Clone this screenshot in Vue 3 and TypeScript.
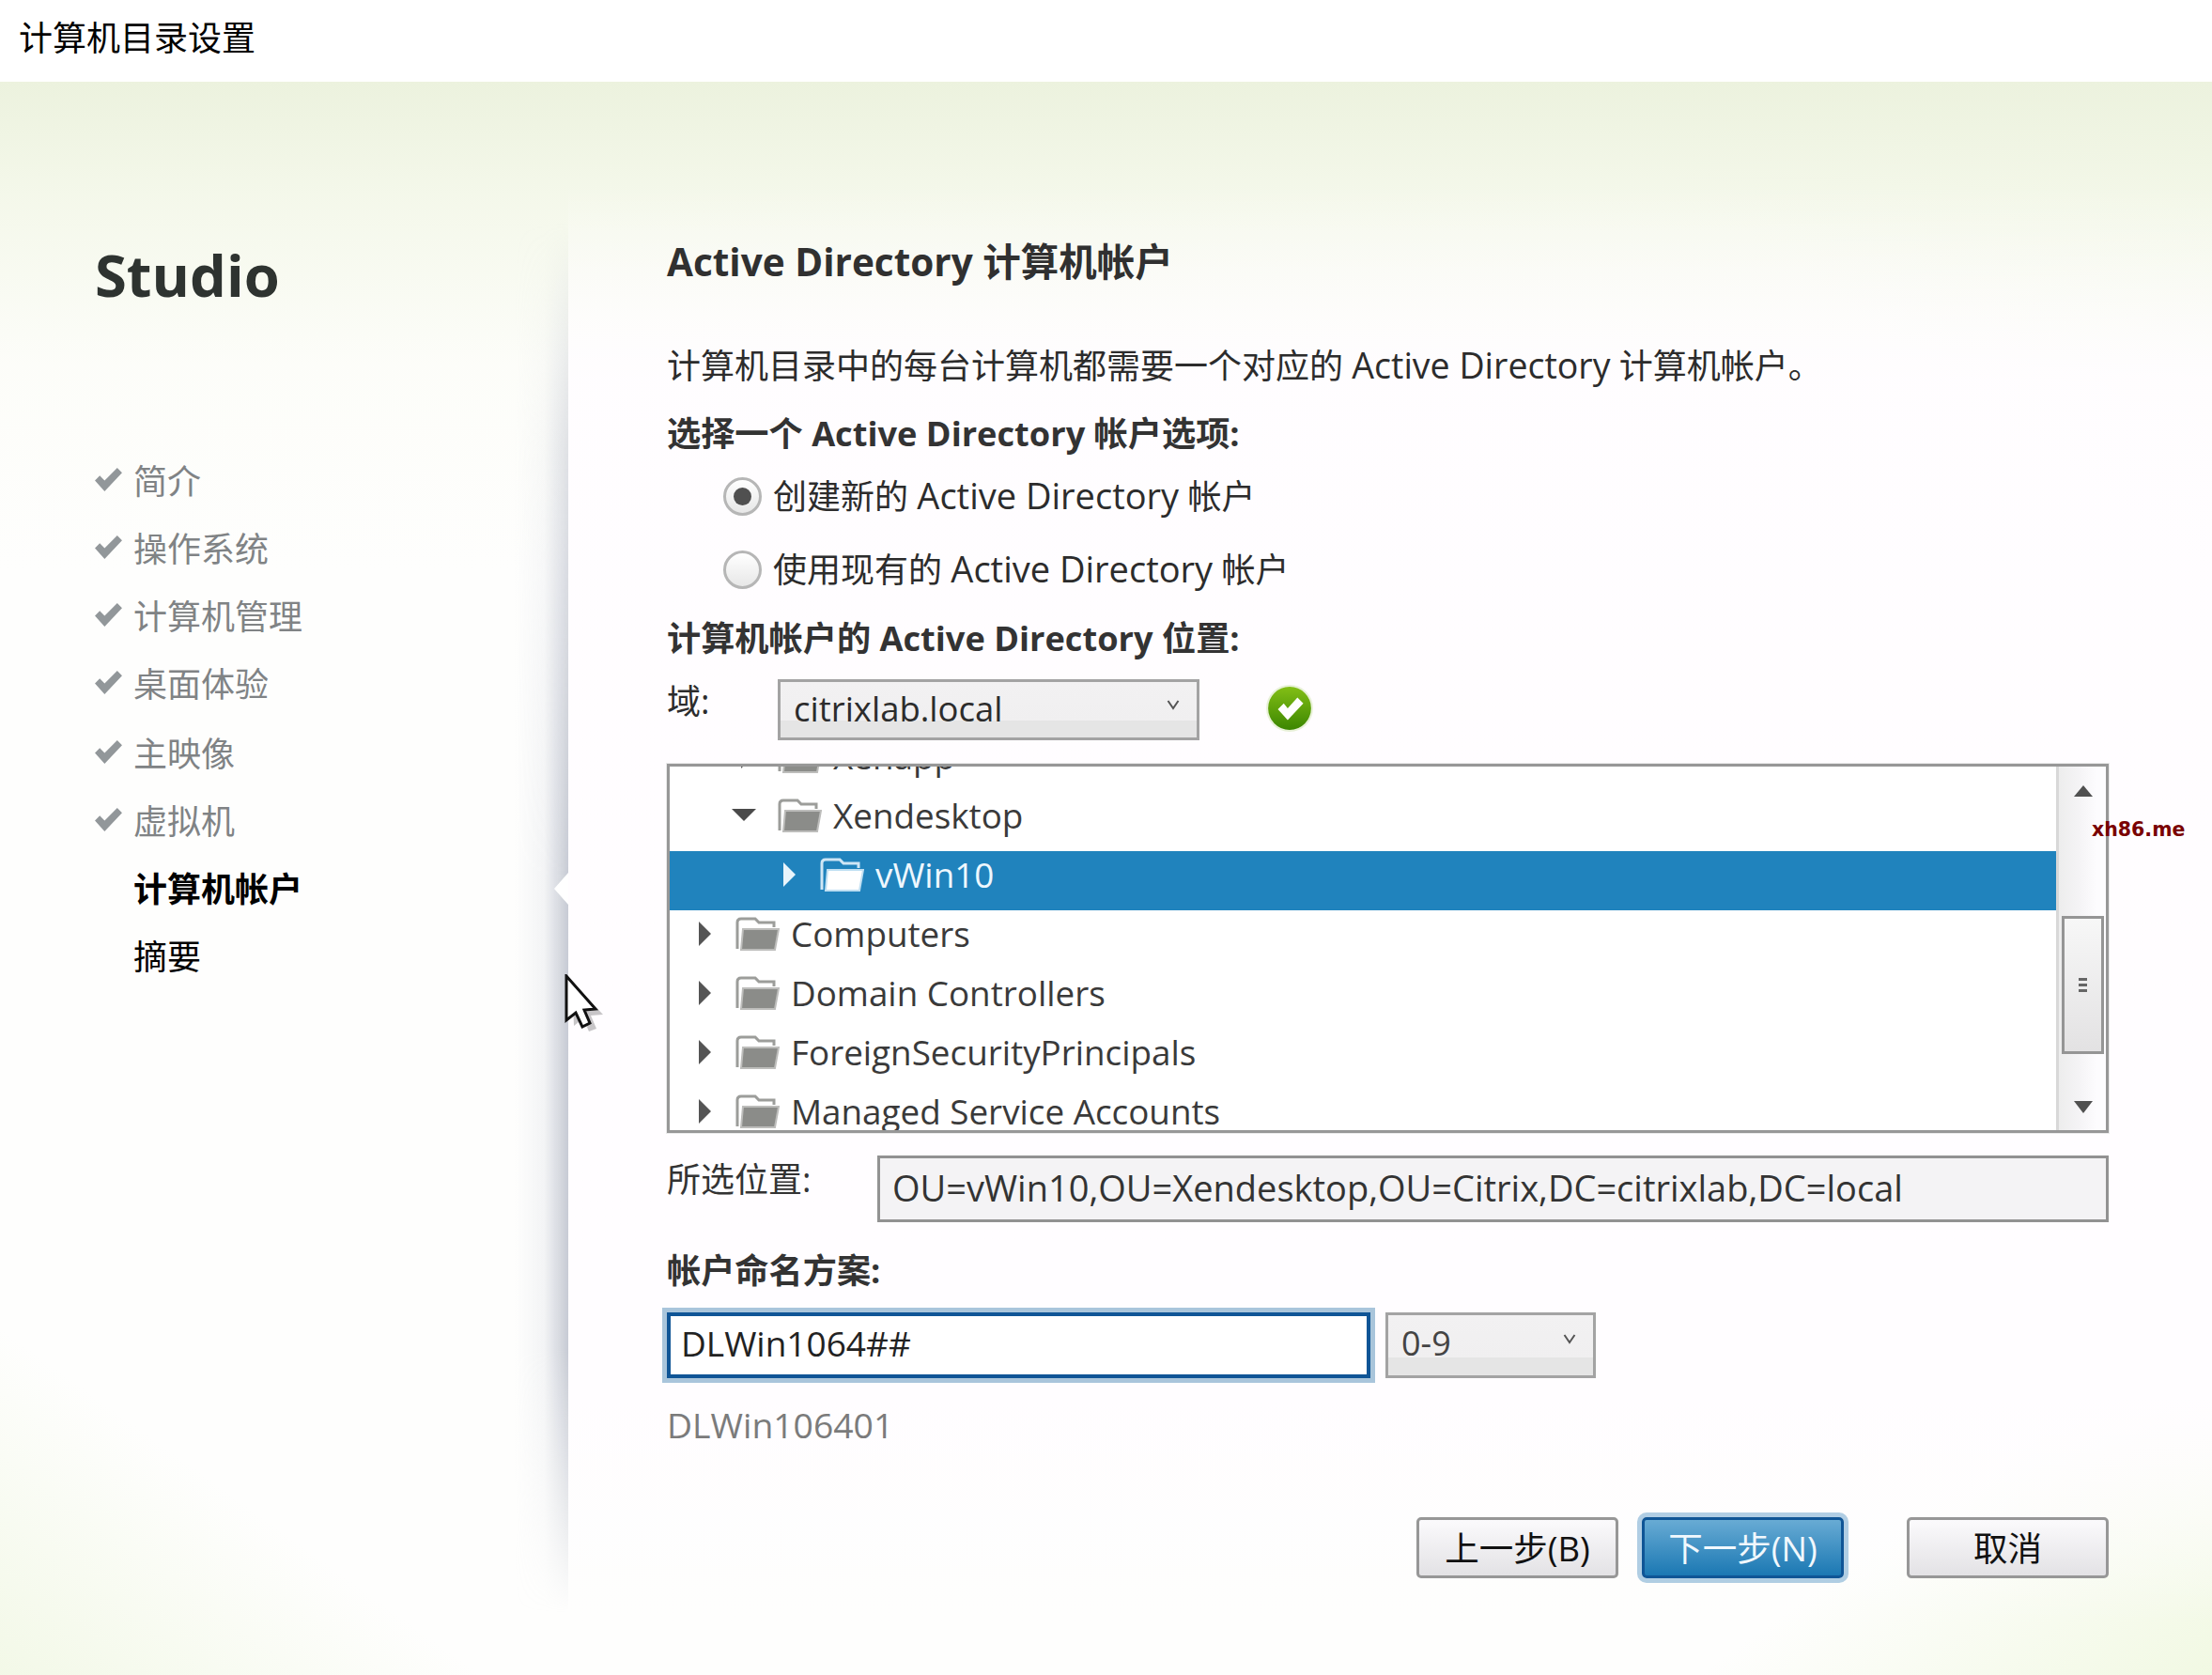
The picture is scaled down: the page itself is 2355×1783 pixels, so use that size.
<script setup lang="ts">
interface TreeRow { label: string; level: number; state: 'open' | 'closed' | 'none'; selected?: boolean }

const steps = [
  { label: '简介', done: true },
  { label: '操作系统', done: true },
  { label: '计算机管理', done: true },
  { label: '桌面体验', done: true },
  { label: '主映像', done: true },
  { label: '虚拟机', done: true },
  { label: '计算机帐户', done: false, current: true },
  { label: '摘要', done: false, current: true },
]

const rows: TreeRow[] = [
  { label: 'Xenapp', level: 1, state: 'closed' },
  { label: 'Xendesktop', level: 1, state: 'open' },
  { label: 'vWin10', level: 2, state: 'closed', selected: true },
  { label: 'Computers', level: 0, state: 'closed' },
  { label: 'Domain Controllers', level: 0, state: 'closed' },
  { label: 'ForeignSecurityPrincipals', level: 0, state: 'closed' },
  { label: 'Managed Service Accounts', level: 0, state: 'closed' },
]
</script>

<template>
  <div class="page">
    <header class="title">计算机目录设置</header>
    <main class="wizard">
      <div class="edge"></div>
      <div class="notch"></div>
      <svg class="cursor" width="42" height="62" viewBox="0 0 42 62">
        <path d="M5 6 L7 53 L17 45 L23 59 L31 56 L25 42 L38 41 Z" fill="#000" opacity=".22" transform="translate(3 2)" />
        <path d="M2 2 V49 L12 41 L19 56 L27 52 L21 38 L33 37 Z" fill="#fff" stroke="#111" stroke-width="3" stroke-linejoin="miter" />
      </svg>

      <aside class="side">
        <h1 class="brand">Studio</h1>
        <ul class="steps">
          <li v-for="s in steps" :key="s.label" class="step" :class="{ done: s.done, current: s.current }">
            <svg v-if="s.done" class="tick" width="31" height="27" viewBox="0 0 30 26">
              <path d="M1 14 L6 9 L11 14 L24 1 L29 6 L11 25 Z" fill="#92979a" />
            </svg>
            <span>{{ s.label }}</span>
          </li>
        </ul>
      </aside>

      <section class="panel">
        <h2 class="head">Active Directory 计算机帐户</h2>
        <p class="line para">计算机目录中的每台计算机都需要一个对应的 <span class="lat">Active Directory</span> 计算机帐户。</p>
        <p class="line strong opt">选择一个 Active Directory 帐户选项:</p>
        <label class="radio-row first"><i class="radio on"></i><span>创建新的 <span class="lat">Active Directory</span> 帐户</span></label>
        <label class="radio-row second"><i class="radio"></i><span>使用现有的 <span class="lat">Active Directory</span> 帐户</span></label>
        <p class="line strong pos">计算机帐户的 Active Directory 位置:</p>

        <div class="domain">
          <span class="domain-label">域:</span>
          <div class="select wide">
            <span>citrixlab.local</span>
            <svg class="chev" width="14" height="12" viewBox="0 0 14 12"><path d="M1.5 2 L7 10 L12.500 2" fill="none" stroke="#555" stroke-width="2" /></svg>
          </div>
          <svg class="ok" width="52" height="52" viewBox="0 0 50 50">
            <defs>
              <linearGradient id="okFill" x1="0" y1="0" x2="0" y2="1">
                <stop offset="0" stop-color="#84c016" />
                <stop offset="1" stop-color="#3a8500" />
              </linearGradient>
            </defs>
            <circle cx="25" cy="25" r="23" fill="url(#okFill)" stroke="#e8f1d8" stroke-width="2" />
            <path d="M13 26 L19 20 L23 25 L33 14 L39 20 L23 37 Z" fill="#fff" />
          </svg>
        </div>

        <div class="tree">
          <div class="tree-list">
            <div class="rows">
              <div v-for="r in rows" :key="r.label" class="row" :class="[`lv${r.level}`, { sel: r.selected }]">
                <svg v-if="r.state === 'closed'" class="arrow" width="15" height="28" viewBox="0 0 15 28"><path d="M1 1 L14 14 L1 27 Z" /></svg>
                <svg v-else class="arrow open" width="28" height="15" viewBox="0 0 28 15"><path d="M1 1 H27 L14 14 Z" /></svg>
                <svg class="folder" width="48" height="38" viewBox="0 0 48 38">
                  <path class="back" d="M3 35 L3 7 Q3 3 7 3 H22 L26 7 H42 V12" />
                  <path class="front" d="M9 14 H47 L43 36 H7 Z" />
                </svg>
                <span class="row-text">{{ r.label }}</span>
              </div>
            </div>
          </div>
          <div class="scroll">
            <svg class="sarrow up" width="22" height="16" viewBox="0 0 22 16"><path d="M11 1 L21 13 H1 Z" /></svg>
            <div class="thumb"><i></i><i></i><i></i></div>
            <svg class="sarrow down" width="22" height="16" viewBox="0 0 22 16"><path d="M1 2 H21 L11 15 Z" /></svg>
          </div>
        </div>
        <span class="mark">xh86.me</span>

        <div class="loc">
          <span class="loc-label">所选位置:</span>
          <div class="loc-field">OU=vWin10,OU=Xendesktop,OU=Citrix,DC=citrixlab,DC=local</div>
        </div>

        <p class="line strong naming">帐户命名方案:</p>
        <div class="name-row">
          <div class="name-input">DLWin1064##</div>
          <div class="select narrow">
            <span>0-9</span>
            <svg class="chev" width="14" height="12" viewBox="0 0 14 12"><path d="M1.5 2 L7 10 L12.500 2" fill="none" stroke="#555" stroke-width="2" /></svg>
          </div>
        </div>
        <p class="line preview">DLWin106401</p>

        <div class="actions">
          <button class="btn">上一步(B)</button>
          <button class="btn primary">下一步(N)</button>
          <button class="btn cancel">取消</button>
        </div>
      </section>
    </main>
  </div>
</template>

<style scoped>
.page {
  width: 2355px;
  height: 1783px;
  overflow: hidden;
  background: #fff;
  color: #2c2c2c;
  font-family: "Open Sans", "Noto Sans CJK SC", sans-serif;
  font-size: 36px;
}
.lat { font-size: 37.5px; }
.title {
  height: 87px;
  box-sizing: border-box;
  padding: 14px 0 0 20px;
  font-size: 36px;
  line-height: 48px;
  color: #000;
  font-family: "Noto Sans CJK SC", sans-serif;
}
.wizard {
  position: relative;
  display: flex;
  height: 1696px;
  background:
    linear-gradient(to bottom, rgba(236, 242, 222, 1) 0, rgba(243, 247, 232, .9) 120px, rgba(251, 252, 245, .5) 300px, rgba(255, 255, 255, 0) 520px),
    linear-gradient(to bottom left, rgba(233, 243, 214, .9) 0, rgba(255, 255, 255, 0) 420px),
    linear-gradient(to top left, rgba(240, 248, 224, .9) 0, rgba(255, 255, 255, 0) 320px),
    linear-gradient(to top right, rgba(240, 247, 226, .8) 0, rgba(255, 255, 255, 0) 300px),
    #fefefd;
}
.edge {
  position: absolute;
  left: 548px;
  top: 150px;
  width: 57px;
  height: 1480px;
  background: linear-gradient(to right, rgba(200, 204, 216, 0) 0, rgba(205, 209, 220, .22) 55%, rgba(180, 185, 198, .75) 100%);
  -webkit-mask-image: linear-gradient(to bottom, transparent 0, rgba(0, 0, 0, .55) 240px, #000 700px, #000 1200px, transparent 100%);
  mask-image: linear-gradient(to bottom, transparent 0, rgba(0, 0, 0, .55) 240px, #000 700px, #000 1200px, transparent 100%);
}
.notch {
  position: absolute;
  left: 590px;
  top: 842px;
  width: 0;
  height: 0;
  border-top: 17px solid transparent;
  border-bottom: 17px solid transparent;
  border-right: 15px solid #fff;
}
.cursor {
  position: absolute;
  left: 601px;
  top: 950px;
  z-index: 3;
}
.side {
  width: 605px;
  flex: none;
  box-sizing: border-box;
  padding: 165px 0 0 101px;
}
.brand {
  margin: 0;
  font-size: 61.5px;
  line-height: 80px;
  font-weight: 700;
  color: #2e3330;
}
.steps {
  list-style: none;
  margin: 145px 0 0;
  padding: 0;
}
.step {
  position: relative;
  height: 72px;
  line-height: 72px;
  padding-left: 41px;
  font-size: 36px;
  color: #808385;
}
.step:nth-child(n + 5) {
  top: 2px;
}
.step.current {
  color: #000;
}
.step:nth-child(7) {
  font-weight: 700;
}
.tick {
  position: absolute;
  left: -1px;
  top: 20px;
}
.panel {
  position: relative;
  flex: 1;
  box-sizing: border-box;
  padding: 167px 110px 0 105px;
  background: linear-gradient(to bottom, rgba(255, 253, 255, 0) 110px, rgba(255, 253, 255, .95) 320px, #fffdff 1400px, rgba(255, 253, 255, 0) 1640px);
}
.head {
  margin: 0;
  font-size: 40.5px;
  line-height: 50px;
  height: 50px;
  font-weight: 700;
  color: #303030;
  white-space: nowrap;
}
.line {
  margin: 0;
  height: 50px;
  line-height: 50px;
  white-space: nowrap;
}
.para { margin-top: 60px; }
.strong { font-weight: 700; color: #333; font-size: 36.2px; }
.opt { margin-top: 22px; }
.pos { margin-top: 23px; }
.radio-row {
  display: flex;
  align-items: center;
  height: 50px;
  padding-left: 60px;
  gap: 12px;
  white-space: nowrap;
  line-height: 50px;
}
.radio-row .lat { font-size: 38px; }
.radio-row.first { margin-top: 17px; }
.radio-row.second { margin-top: 28px; }
.radio {
  position: relative;
  width: 41px;
  height: 41px;
  flex: none;
  box-sizing: border-box;
  border-radius: 50%;
  border: 3px solid #b6b6b6;
  background: linear-gradient(#ffffff, #e7e7e7);
}
.radio.on::after {
  content: "";
  position: absolute;
  left: 8px;
  top: 8px;
  width: 19px;
  height: 19px;
  border-radius: 50%;
  background: #505050;
}
.domain {
  display: flex;
  align-items: flex-start;
  margin-top: 19px;
  height: 65px;
}
.domain-label {
  width: 118px;
  line-height: 48px;
  flex: none;
}
.select {
  position: relative;
  box-sizing: border-box;
  display: flex;
  align-items: center;
  justify-content: space-between;
  border: 3px solid #a3a3a3;
  background: linear-gradient(#f2f1f2 0, #f0eff0 70%, #e5e5e5 70%);
  padding: 0 18px 4px 14px;
}
.select.wide { width: 449px; height: 65px; font-size: 36.5px; }
.select.narrow { width: 224px; height: 70px; margin-left: 16px; color: #444; padding-bottom: 6px; }
.chev { margin-bottom: 8px; }
.ok { margin: 5px 0 0 70px; }
.tree {
  display: flex;
  box-sizing: border-box;
  margin-top: 25px;
  height: 393px;
  border: 3px solid #979797;
  background: #fff;
  box-shadow: 0 0 0 1px #eaeaea;
}
.tree-list {
  flex: 1;
  min-width: 0;
  overflow: hidden;
}
.rows {
  margin-top: -36px;
}
.row {
  display: flex;
  align-items: center;
  height: 63px;
  font-size: 36.8px;
  color: #3a3a3a;
  padding-bottom: 14px;
  box-sizing: border-box;
  white-space: nowrap;
}
.row.lv0 { padding-left: 30px; }
.row.lv1 { padding-left: 65px; }
.row.lv2 { padding-left: 120px; }
.row.sel { background: #2083bd; color: #eef7fd; }
.arrow { flex: none; fill: #555; margin-right: 24px; }
.lv1 .arrow:not(.open) { margin-left: 10px; }
.arrow.open { margin-right: 21px; fill: #4a4a4a; }
.sel .arrow { fill: #e8f4fb; }
.folder { flex: none; margin-right: 12px; }
.folder .back { fill: none; stroke: #9c9d9a; stroke-width: 3; }
.folder .front { fill: #8b8c89; stroke: #bdbdbb; stroke-width: 2; }
.sel .folder .back { stroke: #cfe6f5; }
.sel .folder .front { fill: #fff; stroke: #bfdff2; }
.scroll {
  position: relative;
  width: 53px;
  flex: none;
  border-left: 3px solid #d8d8d8;
  box-sizing: border-box;
  background: linear-gradient(to right, #ededed, #f4f3f5 40%, #fdfcfe 80%);
}
.sarrow { position: absolute; left: 15px; fill: #505050; }
.sarrow.up { top: 19px; }
.sarrow.down { bottom: 17px; }
.thumb {
  position: absolute;
  left: 3px;
  top: 159px;
  width: 45px;
  height: 147px;
  box-sizing: border-box;
  border: 3px solid #959595;
  background: linear-gradient(#f7f7f7, #e3e2e3);
  display: flex;
  flex-direction: column;
  align-items: center;
  justify-content: center;
  gap: 3px;
}
.thumb i {
  width: 9px;
  height: 3px;
  background: #666;
}
.mark {
  position: absolute;
  left: 1622px;
  top: 782px;
  font-family: "DejaVu Sans", sans-serif;
  font-weight: 700;
  font-size: 20.500px;
  line-height: 28px;
  color: #7a0202;
  white-space: nowrap;
}
.loc {
  display: flex;
  margin-top: 24px;
  height: 71px;
}
.loc-label {
  width: 224px;
  flex: none;
  line-height: 52px;
  color: #333;
}
.loc-field {
  flex: 1;
  box-sizing: border-box;
  border: 3px solid #929292;
  background: #f4f3f5;
  font-size: 38px;
  line-height: 62px;
  padding-left: 13px;
  color: #333;
  white-space: nowrap;
}
.naming { margin-top: 26px; }
.name-row {
  display: flex;
  margin-top: 20px;
  height: 70px;
}
.name-input {
  width: 749px;
  box-sizing: border-box;
  border: 4px solid #0f5596;
  background: #fff;
  box-shadow: 0 0 0 5px rgba(112, 160, 195, .6);
  font-size: 37px;
  line-height: 58px;
  padding-left: 11px;
  color: #222;
}
.preview { margin-top: 25px; color: #7b7b7b; font-size: 37.3px; }
.actions {
  display: flex;
  margin-top: 73px;
  justify-content: flex-end;
}
.btn {
  width: 215px;
  height: 65px;
  box-sizing: border-box;
  border: 3px solid #979797;
  border-radius: 5px;
  background: linear-gradient(#fbfafc, #e3e2e5);
  color: #111;
  font-family: inherit;
  font-size: 36.5px;
  line-height: 54px;
  padding: 0;
}
.btn.primary {
  margin-left: 25px;
  border-color: #0f5596;
  background: linear-gradient(#68abd4, #1b78b3);
  color: #f1f8fd;
  box-shadow: 0 0 0 5px rgba(112, 165, 205, .55);
}
.btn.cancel { margin-left: 67px; }
</style>
